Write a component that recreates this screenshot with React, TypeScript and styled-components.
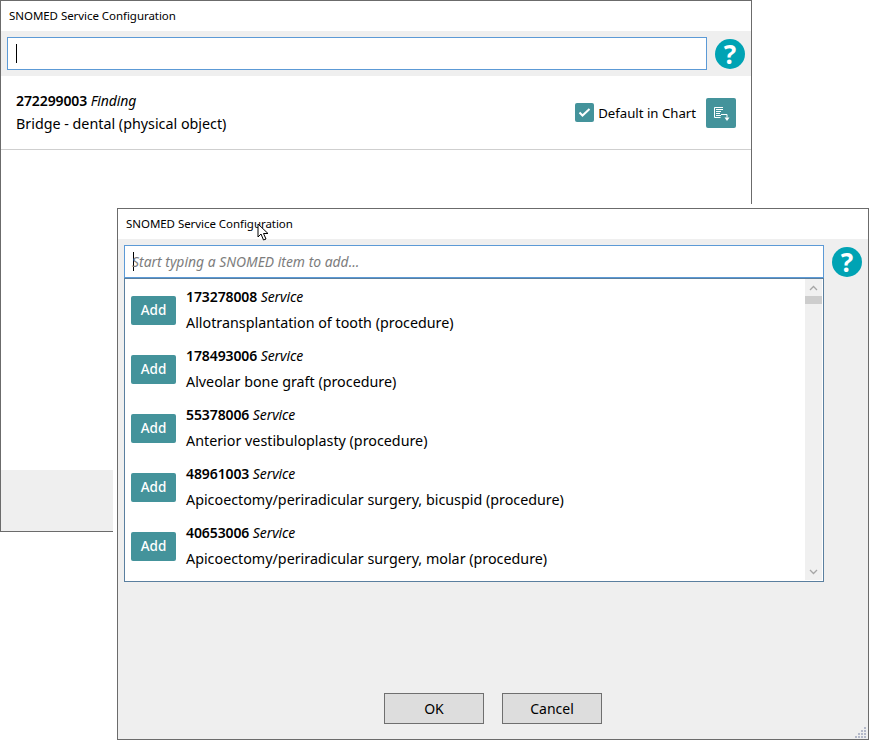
import React from "react";
import styled, { createGlobalStyle } from "styled-components";

const Global = createGlobalStyle`
  html, body { margin: 0; padding: 0; background: #fff; }
  body { font-family: "Noto Sans", "Open Sans", sans-serif; color: #000; }
  #root { width: 869px; height: 740px; position: relative; overflow: hidden; }
`;

const Window = styled.section<{ $left: number; $top: number; $width: number; $height: number; $halo?: boolean; $bg: string }>`
  position: absolute;
  left: ${(p) => p.$left}px;
  top: ${(p) => p.$top}px;
  width: ${(p) => p.$width}px;
  height: ${(p) => p.$height}px;
  box-sizing: border-box;
  border: 1px solid #6b6b6b;
  background: ${(p) => p.$bg};
  display: flex;
  flex-direction: column;
  ${(p) => (p.$halo ? "box-shadow: 0 0 0 4px #fff;" : "")}
`;

const TitleBar = styled.header<{ $pad: number }>`
  height: 30px;
  box-sizing: border-box;
  padding: 0 0 2px ${(p) => p.$pad}px;
  flex: none;
  background: #fff;
  display: flex;
  align-items: center;
  font-size: 11.5px;
  letter-spacing: -0.05px;
`;

const SearchBand = styled.div`
  flex: none;
  display: flex;
  align-items: center;
  gap: 8px;
  padding: 6px 6px;
  background: #efefef;
`;

const SearchBox = styled.div`
  flex: none;
  width: 700px;
  height: 33px;
  box-sizing: border-box;
  border: 1px solid #5c9ad6;
  background: #fff;
  display: flex;
  align-items: center;
  padding-left: 8px;
  font-size: 13.9px;
`;

const Caret = styled.span`
  display: inline-block;
  width: 1px;
  height: 19px;
  background: #000;
  flex: none;
`;

const Placeholder = styled.span`
  font-style: italic;
  color: #7d7d7d;
  margin-left: -2px;
`;

const HelpButton = styled.div`
  flex: none;
  width: 30px;
  height: 30px;
  border-radius: 50%;
  background: #00a3b4;
  color: #fff;
  font-family: "Noto Sans", "Open Sans", sans-serif;
  font-weight: 700;
  font-size: 26px;
  display: flex;
  align-items: center;
  justify-content: center;
  line-height: 1;
`;

const ConfiguredRow = styled.div`
  flex: none;
  height: 74px;
  box-sizing: border-box;
  border-bottom: 1px solid #cfcfcf;
  display: flex;
  align-items: center;
  justify-content: space-between;
  padding: 0 15px;
`;

const ItemText = styled.div<{ $gap: number }>`
  display: flex;
  flex-direction: column;
  gap: ${(p) => p.$gap}px;
`;

const CodeLine = styled.div`
  font-size: 14px;
  line-height: 18px;
  font-weight: 600;
  letter-spacing: -0.1px;
  em { font-weight: 400; }
`;

const NameLine = styled.div`
  font-size: 14.3px;
  line-height: 20px;
`;

const RowActions = styled.div`
  display: flex;
  align-items: center;
`;

const CheckBox = styled.span`
  width: 19px;
  height: 19px;
  border-radius: 2px;
  background: #44939b;
  display: flex;
  align-items: center;
  justify-content: center;
`;

const CheckLabel = styled.span`
  font-size: 13.2px;
  margin-left: 4px;
  margin-right: 10px;
`;

const IconButton = styled.div`
  width: 30px;
  height: 30px;
  border-radius: 2px;
  background: #44939b;
  display: flex;
  align-items: center;
  justify-content: center;
`;

const Spacer = styled.div`
  flex: 1;
  background: #fff;
`;

const BackFooter = styled.div`
  flex: none;
  height: 61px;
  background: #efefef;
`;

const FrontBody = styled.div`
  flex: 1;
  background: #efefef;
  display: flex;
  flex-direction: column;
  min-height: 0;
`;

const ListBox = styled.div`
  flex: none;
  margin: -6px 0 0 6px;
  width: 700px;
  height: 304px;
  box-sizing: border-box;
  border: 1px solid #5a7f9f;
  background: #fff;
  display: flex;
`;

const Results = styled.div`
  flex: 1;
  padding: 9px 0 0 6px;
  display: flex;
  flex-direction: column;
  gap: 15px;
`;

const Result = styled.div`
  display: flex;
  align-items: center;
  gap: 10px;
  height: 44px;
`;

const AddButton = styled.div`
  width: 45px;
  height: 29px;
  border-radius: 2px;
  background: #44939b;
  color: #fff;
  font-size: 13.5px;
  font-weight: 500;
  display: flex;
  align-items: center;
  justify-content: center;
`;

const ScrollBar = styled.div`
  flex: none;
  width: 17px;
  margin: 0 1px 1px 0;
  background: #f0f0f0;
  display: flex;
  flex-direction: column;
  align-items: center;
  justify-content: space-between;
`;

const ScrollTop = styled.div`
  width: 100%;
  display: flex;
  flex-direction: column;
  align-items: center;
`;

const ScrollArrow = styled.div`
  height: 17px;
  width: 100%;
  display: flex;
  align-items: center;
  justify-content: center;
`;

const ScrollThumb = styled.div`
  width: 100%;
  height: 8px;
  background: #cdcdcd;
`;

const Footer = styled.div`
  flex: 1;
  display: flex;
  justify-content: center;
  align-items: flex-end;
  gap: 18px;
  padding: 0 0 15px 0;
  position: relative;
`;

const DialogButton = styled.div`
  width: 100px;
  height: 31px;
  box-sizing: border-box;
  border: 1px solid #6f6f6f;
  background: #dddddd;
  font-size: 14px;
  display: flex;
  align-items: center;
  justify-content: center;
`;

const Grip = styled.svg`
  position: absolute;
  right: 1px;
  bottom: 1px;
`;

const Pointer = styled.svg`
  position: absolute;
  left: 257px;
  top: 223px;
`;

const items = [
  ["173278008", "Allotransplantation of tooth (procedure)"],
  ["178493006", "Alveolar bone graft (procedure)"],
  ["55378006", "Anterior vestibuloplasty (procedure)"],
  ["48961003", "Apicoectomy/periradicular surgery, bicuspid (procedure)"],
  ["40653006", "Apicoectomy/periradicular surgery, molar (procedure)"],
];

export default function App() {
  return (
    <>
      <Global />
      <Window $left={0} $top={0} $width={752} $height={532} $bg="#fff">
        <TitleBar $pad={8}>SNOMED Service Configuration</TitleBar>
        <SearchBand>
          <SearchBox><Caret /></SearchBox>
          <HelpButton>?</HelpButton>
        </SearchBand>
        <ConfiguredRow>
          <ItemText $gap={4}>
            <CodeLine>272299003 <em>Finding</em></CodeLine>
            <NameLine>Bridge - dental (physical object)</NameLine>
          </ItemText>
          <RowActions>
            <CheckBox>
              <svg width="13" height="13" viewBox="0 0 13 13" fill="none" stroke="#fff" strokeWidth="2"><path d="M1.5 6.5l3 3 7-6.5" /></svg>
            </CheckBox>
            <CheckLabel>Default in Chart</CheckLabel>
            <IconButton>
              <svg width="18" height="18" viewBox="0 0 18 18" fill="none" stroke="#fff" strokeWidth="1">
                <path d="M2.5 3.5h8.5M2.5 3.5v10h6M4 5.5h7M4 7.5h5M4 9.5h4M4 11.5h5M9 10.5h6v3" />
                <path d="M12.5 13.5h5l-2.5 3.5z" fill="#fff" stroke="none" />
              </svg>
            </IconButton>
          </RowActions>
        </ConfiguredRow>
        <Spacer />
        <BackFooter />
      </Window>
      <Window $left={117} $top={208} $width={752} $height={532} $bg="#efefef" $halo>
        <TitleBar $pad={8}>SNOMED Service Configuration</TitleBar>
        <FrontBody>
          <SearchBand>
            <SearchBox><Caret /><Placeholder>Start typing a SNOMED item to add...</Placeholder></SearchBox>
            <HelpButton>?</HelpButton>
          </SearchBand>
          <ListBox>
            <Results>
              {items.map(([code, name]) => (
                <Result key={code}>
                  <AddButton>Add</AddButton>
                  <ItemText $gap={7}>
                    <CodeLine>{code} <em>Service</em></CodeLine>
                    <NameLine>{name}</NameLine>
                  </ItemText>
                </Result>
              ))}
            </Results>
            <ScrollBar>
              <ScrollTop>
                <ScrollArrow>
                  <svg width="9" height="6" viewBox="0 0 9 6" fill="none" stroke="#a6a6a6" strokeWidth="1.3"><path d="M1 5l3.5-3.5L8 5" /></svg>
                </ScrollArrow>
                <ScrollThumb />
              </ScrollTop>
              <ScrollArrow>
                <svg width="9" height="6" viewBox="0 0 9 6" fill="none" stroke="#a6a6a6" strokeWidth="1.3"><path d="M1 1l3.5 3.5L8 1" /></svg>
              </ScrollArrow>
            </ScrollBar>
          </ListBox>
          <Footer>
            <DialogButton>OK</DialogButton>
            <DialogButton>Cancel</DialogButton>
            <Grip width="12" height="12" viewBox="0 0 12 12" fill="#b4b9c9">
              <rect x="9" y="1" width="2" height="2" /><rect x="6" y="4" width="2" height="2" /><rect x="9" y="4" width="2" height="2" />
              <rect x="3" y="7" width="2" height="2" /><rect x="6" y="7" width="2" height="2" /><rect x="9" y="7" width="2" height="2" />
              <rect x="0" y="10" width="2" height="2" /><rect x="3" y="10" width="2" height="2" /><rect x="6" y="10" width="2" height="2" /><rect x="9" y="10" width="2" height="2" />
            </Grip>
          </Footer>
        </FrontBody>
      </Window>
      <Pointer width="14" height="19" viewBox="0 0 14 19">
        <path d="M1 1v13l3-3 2.5 6 2.5-1-2.5-5.5H11z" fill="#fff" stroke="#000" strokeWidth="1" />
      </Pointer>
    </>
  );
}
